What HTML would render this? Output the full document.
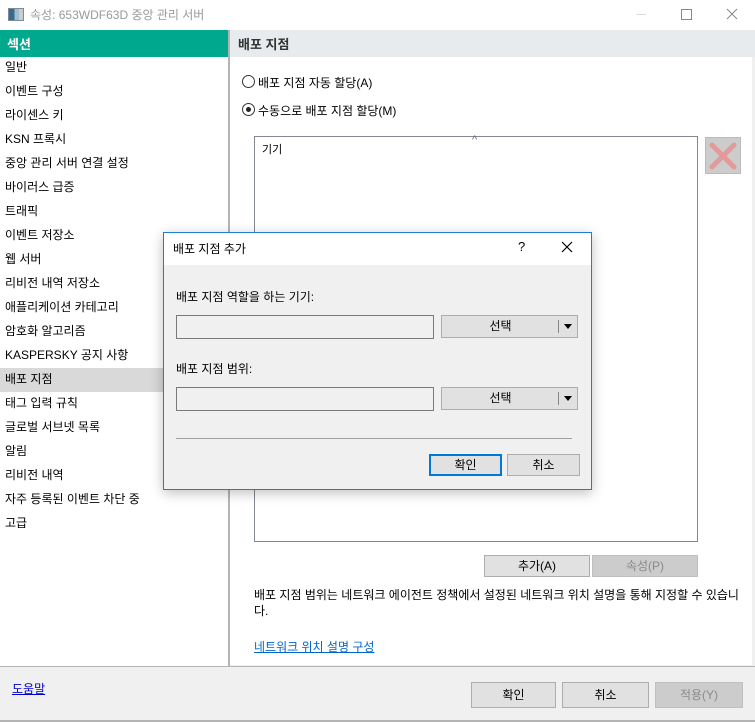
<!DOCTYPE html>
<html><head><meta charset="utf-8"><style>
*{margin:0;padding:0;box-sizing:border-box}
body{width:755px;height:722px;overflow:hidden;background:#f0f0f0;font-family:"Liberation Sans","Noto Sans CJK KR",sans-serif;font-size:12px;color:#000;position:relative}
.a{position:absolute}
.btn{position:absolute;background:#e1e1e1;border:1px solid #adadad;text-align:center;font-size:12px}
.dis{background:#cccccc;border-color:#bfbfbf;color:#8a8a8a}
.item{position:absolute;left:0;width:228px;height:24px;line-height:23px;padding-left:5px;font-size:12px}
</style></head><body>
<div class="a" style="left:0;top:0;width:755px;height:30px;background:#fff"></div>
<div class="a" style="left:8px;top:8px;width:16px;height:13px;border:1px solid #7a8a9a;background:linear-gradient(90deg,#3a6a8a 0 40%,#9fbfcf 40% 70%,#ccc 70%)"></div>
<div class="a" style="left:30px;top:6px;font-size:12px;color:#999">속성: 653WDF63D 중앙 관리 서버</div>
<div class="a" style="left:636px;top:14px;width:10px;height:1px;background:#ddd"></div>
<div class="a" style="left:681px;top:9px;width:11px;height:11px;border:1px solid #888"></div>
<svg class="a" style="left:726px;top:8px" width="12" height="12"><path d="M1 1L11 11M11 1L1 11" stroke="#888" stroke-width="1"/></svg>
<div class="a" style="left:0;top:30px;width:228px;height:637px;background:#fff"></div>
<div class="a" style="left:0;top:30px;width:228px;height:27px;background:#00a88e;color:#fff;font-weight:bold;padding:4px 0 0 7px;font-size:13px">섹션</div>
<div class="item" style="top:56px">일반</div>
<div class="item" style="top:80px">이벤트 구성</div>
<div class="item" style="top:104px">라이센스 키</div>
<div class="item" style="top:128px">KSN 프록시</div>
<div class="item" style="top:152px">중앙 관리 서버 연결 설정</div>
<div class="item" style="top:176px">바이러스 급증</div>
<div class="item" style="top:200px">트래픽</div>
<div class="item" style="top:224px">이벤트 저장소</div>
<div class="item" style="top:248px">웹 서버</div>
<div class="item" style="top:272px">리비전 내역 저장소</div>
<div class="item" style="top:296px">애플리케이션 카테고리</div>
<div class="item" style="top:320px">암호화 알고리즘</div>
<div class="item" style="top:344px">KASPERSKY 공지 사항</div>
<div class="item" style="top:368px;background:#d9d9d9">배포 지점</div>
<div class="item" style="top:392px">태그 입력 규칙</div>
<div class="item" style="top:416px">글로벌 서브넷 목록</div>
<div class="item" style="top:440px">알림</div>
<div class="item" style="top:464px">리비전 내역</div>
<div class="item" style="top:488px">자주 등록된 이벤트 차단 중</div>
<div class="item" style="top:512px">고급</div>
<div class="a" style="left:228px;top:30px;width:2px;height:637px;background:#b4b4b4"></div>
<div class="a" style="left:230px;top:30px;width:525px;height:27px;background:#e8ebed;padding:4px 0 0 8px;font-weight:bold;font-size:13px;color:#333">배포 지점</div>
<div class="a" style="left:230px;top:57px;width:522px;height:608px;background:#fff"></div>
<div class="a" style="left:242px;top:75px;width:13px;height:13px;border:1px solid #333;border-radius:50%"></div>
<div class="a" style="left:258px;top:74px">배포 지점 자동 할당(A)</div>
<div class="a" style="left:242px;top:103px;width:13px;height:13px;border:1px solid #333;border-radius:50%"><div class="a" style="left:3px;top:3px;width:5px;height:5px;background:#222;border-radius:50%"></div></div>
<div class="a" style="left:258px;top:102px">수동으로 배포 지점 할당(M)</div>
<div class="a" style="left:254px;top:136px;width:444px;height:406px;border:1px solid #828790;background:#fff"></div>
<div class="a" style="left:262px;top:141px;font-size:11px">기기</div>
<div class="a" style="left:472px;top:134px;color:#666;font-size:11px">^</div>
<div class="a" style="left:705px;top:137px;width:36px;height:37px;background:#ccc;border:1px solid #bbb"></div>
<svg class="a" style="left:708px;top:141px" width="30" height="30"><path d="M4 4L26 26M26 4L4 26" stroke="#e39a9a" stroke-width="5" stroke-linecap="round"/></svg>
<div class="btn" style="left:484px;top:555px;width:106px;height:22px;line-height:20px">추가(A)</div>
<div class="btn dis" style="left:592px;top:555px;width:106px;height:22px;line-height:20px">속성(P)</div>
<div class="a" style="left:254px;top:587px;width:498px;line-height:16px;font-size:12px">배포 지점 범위는 네트워크 에이전트 정책에서 설정된 네트워크 위치 설명을 통해 지정할 수 있습니다.</div>
<div class="a" style="left:254px;top:638px;color:#0066cc;text-decoration:underline">네트워크 위치 설명 구성</div>
<div class="a" style="left:0;top:666px;width:755px;height:1px;background:#b4b4b4"></div>
<div class="a" style="left:12px;top:680px;color:#00c;text-decoration:underline">도움말</div>
<div class="btn" style="left:471px;top:682px;width:85px;height:26px;line-height:24px">확인</div>
<div class="btn" style="left:562px;top:682px;width:87px;height:26px;line-height:24px">취소</div>
<div class="btn dis" style="left:655px;top:682px;width:88px;height:26px;line-height:24px">적용(Y)</div>
<div class="a" style="left:0;top:720px;width:755px;height:2px;background:#b4b4b4"></div>
<div class="a" style="left:163px;top:232px;width:429px;height:258px;background:#f0f0f0;border:1px solid #1a7fd0;box-shadow:0 3px 12px rgba(0,0,0,.25)">
<div class="a" style="left:0;top:0;width:427px;height:32px;background:#fff"></div>
<div class="a" style="left:9px;top:7px;font-size:12px">배포 지점 추가</div>
<div class="a" style="left:354px;top:6px;font-size:13px">?</div>
<svg class="a" style="left:397px;top:8px" width="12" height="12"><path d="M1 1L11 11M11 1L1 11" stroke="#000" stroke-width="1.2"/></svg>
<div class="a" style="left:12px;top:55px">배포 지점 역할을 하는 기기:</div>
<div class="a" style="left:12px;top:82px;width:258px;height:24px;border:1px solid #7a7a7a;background:#f0f0f0"></div>
<div class="btn" style="left:277px;top:82px;width:137px;height:23px;line-height:21px"><span style="margin-right:18px">선택</span><span class="a" style="right:18px;top:4px;width:1px;height:13px;background:#888"></span><svg class="a" style="right:5px;top:8px" width="8" height="5"><path d="M0 0H8L4 5Z" fill="#000"/></svg></div>
<div class="a" style="left:12px;top:127px">배포 지점 범위:</div>
<div class="a" style="left:12px;top:154px;width:258px;height:24px;border:1px solid #7a7a7a;background:#f0f0f0"></div>
<div class="btn" style="left:277px;top:154px;width:137px;height:23px;line-height:21px"><span style="margin-right:18px">선택</span><span class="a" style="right:18px;top:4px;width:1px;height:13px;background:#888"></span><svg class="a" style="right:5px;top:8px" width="8" height="5"><path d="M0 0H8L4 5Z" fill="#000"/></svg></div>
<div class="a" style="left:12px;top:205px;width:396px;height:1px;background:#a0a0a0"></div>
<div class="btn" style="left:265px;top:221px;width:73px;height:22px;line-height:18px;border:2px solid #0078d7">확인</div>
<div class="btn" style="left:343px;top:221px;width:73px;height:22px;line-height:20px">취소</div>
</div>
</body></html>
